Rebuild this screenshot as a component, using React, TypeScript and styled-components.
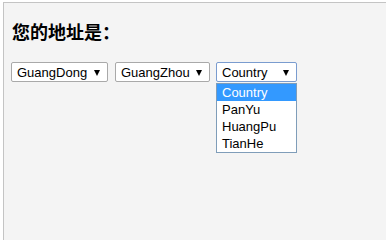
import React from "react";
import styled, { createGlobalStyle } from "styled-components";

const Global = createGlobalStyle`
  html, body {
    margin: 0;
    padding: 0;
    background: #ffffff;
    overflow: hidden;
  }
`;

const Panel = styled.div`
  margin: 2px 0 0 3px;
  min-height: calc(100vh - 2px);
  box-sizing: border-box;
  border-top: 1px solid #c4c4c4;
  border-left: 1px solid #c4c4c4;
  background: #f4f4f4;
  padding: 19px 0 0 7px;
  font-family: "Liberation Sans", Arial, sans-serif;
`;

const Title = styled.h1`
  margin: 0 0 0 1px;
  font-family: "Noto Sans CJK SC", "Noto Sans", sans-serif;
  font-size: 18px;
  line-height: 18px;
  font-weight: 700;
  color: #000;
`;

const Row = styled.div`
  display: flex;
  align-items: flex-start;
  margin-top: 22px;
`;

const Field = styled.div<{ $w: number; $gap: number }>`
  position: relative;
  width: ${(p) => p.$w}px;
  margin-right: ${(p) => p.$gap}px;
  flex: none;
`;

const SelectBox = styled.div<{ $focused?: boolean }>`
  box-sizing: border-box;
  height: 20px;
  display: flex;
  align-items: center;
  justify-content: space-between;
  padding: 0 7px 0 5px;
  background: #fff;
  border: 1px solid ${(p) => (p.$focused ? "#7a9ccf" : "#a9a9a9")};
  border-radius: 2px;
  font-size: 13px;
  color: #000;
  white-space: nowrap;
`;

const Arrow = styled.span`
  width: 0;
  height: 0;
  border-left: 3px solid transparent;
  border-right: 3px solid transparent;
  border-top: 6px solid #000;
  margin-top: 1px;
`;

const List = styled.ul`
  position: absolute;
  top: 21px;
  left: 0;
  right: 0;
  margin: 0;
  padding: 0;
  list-style: none;
  background: #fff;
  border: 1px solid #7f9db9;
`;

const Option = styled.li<{ $active?: boolean }>`
  height: 17px;
  line-height: 17px;
  padding-left: 5px;
  font-size: 13px;
  color: ${(p) => (p.$active ? "#fff" : "#000")};
  background: ${(p) => (p.$active ? "#3399ff" : "transparent")};
`;

const options = ["Country", "PanYu", "HuangPu", "TianHe"];

export default function App() {
  return (
    <>
      <Global />
      <Panel>
        <Title>您的地址是：</Title>
        <Row>
          <Field $w={97} $gap={7}>
            <SelectBox>
              <span>GuangDong</span>
              <Arrow />
            </SelectBox>
          </Field>
          <Field $w={95} $gap={6}>
            <SelectBox>
              <span>GuangZhou</span>
              <Arrow />
            </SelectBox>
          </Field>
          <Field $w={81} $gap={0}>
            <SelectBox $focused>
              <span>Country</span>
              <Arrow />
            </SelectBox>
            <List>
              {options.map((o, i) => (
                <Option key={o} $active={i === 0}>
                  {o}
                </Option>
              ))}
            </List>
          </Field>
        </Row>
      </Panel>
    </>
  );
}
